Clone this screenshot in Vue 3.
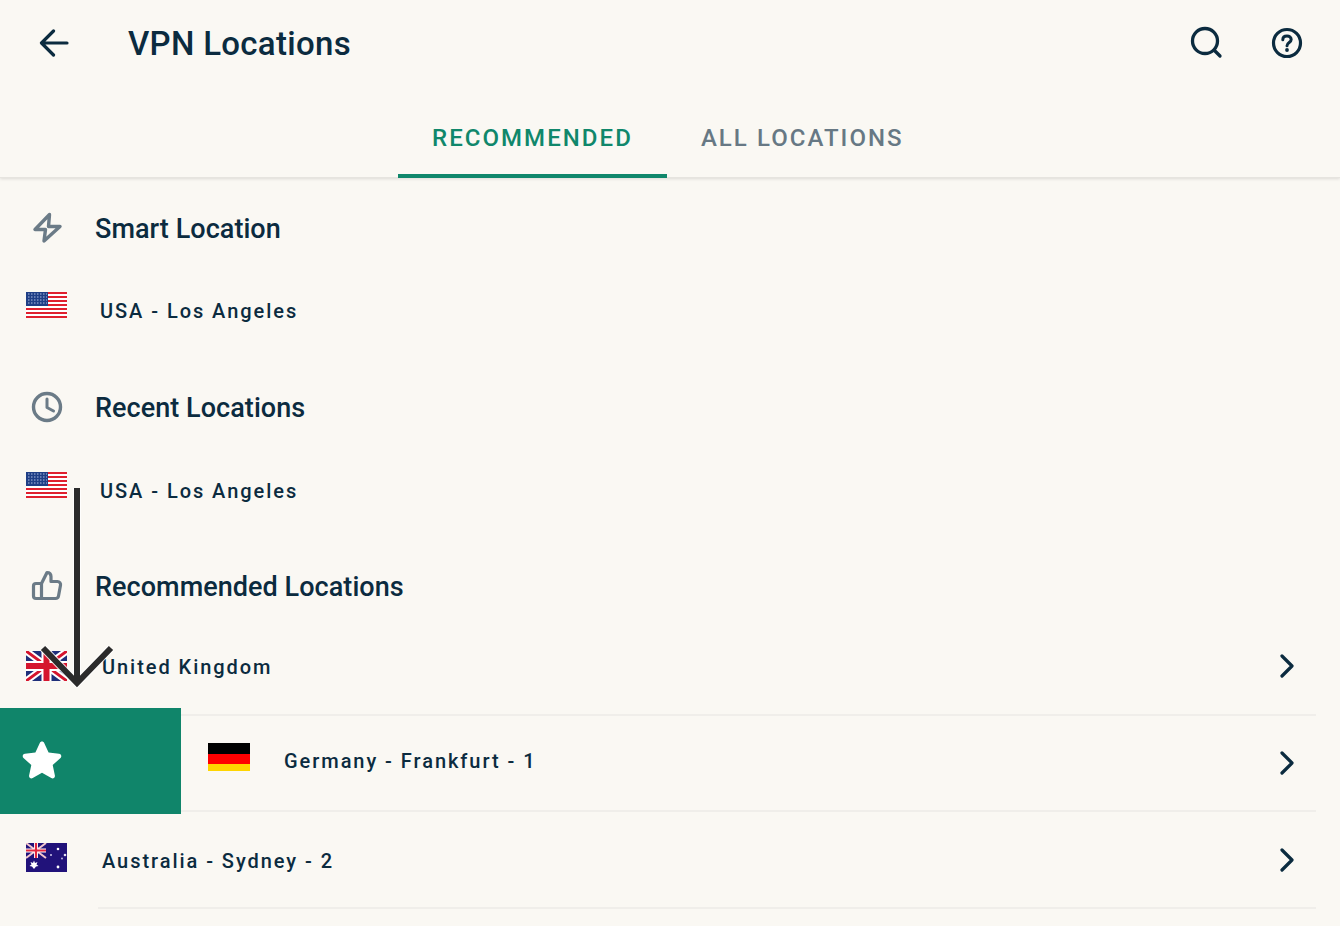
<script setup>
const chevron = "M2 2 L12 12 L2 22"
</script>

<template>
  <div class="screen">
    <header class="top">
      <div class="toolbar">
        <svg class="back" width="30" height="28" viewBox="0 0 30 28" fill="none">
          <path d="M28 14H3M14.500 2 L2.500 14 L14.500 26" stroke="#0b2b3f" stroke-width="3.200" stroke-linecap="round" stroke-linejoin="round" />
        </svg>
        <h1>VPN Locations</h1>
        <div class="tools">
          <svg width="34" height="34" viewBox="0 0 34 34" fill="none">
            <circle cx="15" cy="15" r="12.500" stroke="#0b2b3f" stroke-width="3.300" />
            <path d="M24.500 24.500 L30 30" stroke="#0b2b3f" stroke-width="3.300" stroke-linecap="round" />
          </svg>
          <svg width="32" height="32" viewBox="0 0 32 32" fill="none">
            <circle cx="16" cy="16" r="13.500" stroke="#0b2b3f" stroke-width="3.200" />
            <path d="M11.800 12.800 C11.800 10.300 13.700 9 16 9 C18.400 9 20.200 10.400 20.200 12.500 C20.200 15.500 16 15.500 16 18.800" stroke="#0b2b3f" stroke-width="3" stroke-linecap="round" />
            <circle cx="16" cy="23" r="1.900" fill="#0b2b3f" />
          </svg>
        </div>
      </div>
      <nav class="tabs">
        <div class="tab active">RECOMMENDED</div>
        <div class="tab">ALL LOCATIONS</div>
      </nav>
    </header>

    <main class="list">
      <section class="group">
        <div class="head">
          <svg width="32" height="32" viewBox="0 0 32 32" fill="none">
            <path d="M18.500 2.500 L4 17.500 H14.500 L13 29 L29 14.500 H17.500 Z" stroke="#6b7b87" stroke-width="3.400" stroke-linejoin="round" />
          </svg>
          <span>Smart Location</span>
        </div>
        <div class="plain-row">
          <svg class="flag" width="41" height="26" viewBox="0 0 41 26">
            <rect width="41" height="26" fill="#fff" />
            <path d="M0 1h41M0 5h41M0 9h41M0 13h41M0 17h41M0 21h41M0 25h41" stroke="#e0202e" stroke-width="2" />
            <rect width="22" height="14" fill="#1f3f86" />
            <path d="M2 2h19M2 5h19M2 8h19M2 11h19" stroke="#aebde0" stroke-width="1" stroke-dasharray="1.500 1.500" />
          </svg>
          <span class="name">USA - Los Angeles</span>
        </div>
      </section>

      <section class="group">
        <div class="head">
          <svg width="32" height="32" viewBox="0 0 32 32" fill="none">
            <circle cx="16" cy="16" r="13.500" stroke="#6b7b87" stroke-width="3.400" />
            <path d="M16 8 V16.500 L22.500 20" stroke="#6b7b87" stroke-width="3" stroke-linecap="round" stroke-linejoin="round" />
          </svg>
          <span>Recent Locations</span>
        </div>
        <div class="plain-row late">
          <svg class="flag" width="41" height="26" viewBox="0 0 41 26">
            <rect width="41" height="26" fill="#fff" />
            <path d="M0 1h41M0 5h41M0 9h41M0 13h41M0 17h41M0 21h41M0 25h41" stroke="#e0202e" stroke-width="2" />
            <rect width="22" height="14" fill="#1f3f86" />
            <path d="M2 2h19M2 5h19M2 8h19M2 11h19" stroke="#aebde0" stroke-width="1" stroke-dasharray="1.500 1.500" />
          </svg>
          <span class="name">USA - Los Angeles</span>
        </div>
      </section>

      <section class="group short">
        <div class="head">
          <svg width="32" height="32" viewBox="0 0 32 32" fill="none">
            <path d="M10.500 13.500 V28.500 H5 C3.500 28.500 2.500 27.500 2.500 26 V16 C2.500 14.500 3.500 13.500 5 13.500 Z M10.500 13.500 L16 2.500 C18.500 2.500 20 4.200 20 6.500 V11.500 H26.500 C28.500 11.500 30 13.300 29.500 15.300 L27.500 26 C27.200 27.500 26 28.500 24.500 28.500 H10.500" stroke="#6b7b87" stroke-width="3.200" stroke-linejoin="round" />
          </svg>
          <span>Recommended Locations</span>
        </div>
      </section>

      <div class="loc-row uk">
        <svg class="flag" width="41" height="30" viewBox="0 0 41 30">
          <rect width="41" height="30" fill="#1f2f7a" />
          <path d="M0 0L41 30M41 0L0 30" stroke="#fff" stroke-width="7" />
          <path d="M0 0L41 30M41 0L0 30" stroke="#d5152e" stroke-width="3" />
          <path d="M20.500 0V30M0 15H41" stroke="#fff" stroke-width="10" />
          <path d="M20.500 0V30M0 15H41" stroke="#d5152e" stroke-width="6" />
        </svg>
        <div class="loc-body">
          <span class="name">United Kingdom</span>
          <svg class="chev" width="15" height="24" viewBox="0 0 15 24" fill="none">
            <path :d="chevron" stroke="#0b2b3f" stroke-width="3.200" stroke-linecap="round" stroke-linejoin="round" />
          </svg>
        </div>
      </div>

      <div class="loc-row de">
        <div class="swipe-action">
          <svg width="42" height="40" viewBox="0 0 42 40">
            <path d="M21 1.500 C22 1.500 22.800 2 23.200 3 L27.600 12.600 L38 13.800 C40.300 14.100 41 16.500 39.500 18 L31.700 25 L33.900 35.400 C34.300 37.600 32.200 39.200 30.300 38.100 L21 32.800 L11.700 38.100 C9.800 39.200 7.700 37.600 8.100 35.400 L10.300 25 L2.500 18 C1 16.500 1.700 14.100 4 13.800 L14.400 12.600 L18.800 3 C19.200 2 20 1.500 21 1.500 Z" fill="#fff" />
          </svg>
        </div>
        <div class="loc-body">
          <svg class="flag" width="42" height="28" viewBox="0 0 42 28">
            <rect width="42" height="11" fill="#000" />
            <rect y="11" width="42" height="10" fill="#f00" />
            <rect y="21" width="42" height="7" fill="#ffd500" />
          </svg>
          <span class="name">Germany - Frankfurt - 1</span>
          <svg class="chev" width="15" height="24" viewBox="0 0 15 24" fill="none">
            <path :d="chevron" stroke="#0b2b3f" stroke-width="3.200" stroke-linecap="round" stroke-linejoin="round" />
          </svg>
        </div>
      </div>

      <div class="loc-row au">
        <svg class="flag" width="41" height="29" viewBox="0 0 41 29">
          <rect width="41" height="29" fill="#21127a" />
          <path d="M0 0L20 15M20 0L0 15" stroke="#f3c6cc" stroke-width="2" />
          <path d="M10 0V15M0 7.500H20" stroke="#fff" stroke-width="4" />
          <path d="M10 0V15M0 7.500H20" stroke="#e2263f" stroke-width="2.200" />
          <path d="M8 17.500 L9 20 L11.500 19 L10.500 21.500 L12.500 23 L10 23.500 L8 26 L6 23.500 L3.500 23 L5.500 21.500 L4.500 19 L7 20 Z" fill="#fff" />
          <circle cx="32" cy="6" r="1.300" fill="#fff" />
          <circle cx="25" cy="12" r="1" fill="#cfc8ea" />
          <circle cx="39" cy="12" r="1.300" fill="#e6e2f4" />
          <circle cx="36" cy="15.500" r="0.900" fill="#cfc8ea" />
          <circle cx="32" cy="24" r="1.400" fill="#fff" />
        </svg>
        <div class="loc-body">
          <span class="name">Australia - Sydney - 2</span>
          <svg class="chev" width="15" height="24" viewBox="0 0 15 24" fill="none">
            <path :d="chevron" stroke="#0b2b3f" stroke-width="3.200" stroke-linecap="round" stroke-linejoin="round" />
          </svg>
        </div>
      </div>
    </main>

    <svg class="arrow" width="84" height="206" viewBox="0 0 84 206" fill="none">
      <path d="M39 2 V197 M5 162 L39 197 L73 162" stroke="#fff" stroke-opacity="0.800" stroke-width="8" />
      <path d="M39 2 V197 M5 162 L39 197 L73 162" stroke="#2b2b2b" stroke-width="6" />
    </svg>
  </div>
</template>

<style scoped>
.screen {
  position: relative;
  width: 1340px;
  height: 926px;
  overflow: hidden;
  background: #faf8f3;
  color: #0b2b3f;
  font-family: Roboto, "Liberation Sans", sans-serif;
}
.top {
  height: 178px;
  box-sizing: border-box;
  border-bottom: 1px solid #e6e4df;
  box-shadow: 0 1px 3px rgba(0, 0, 0, 0.12);
  display: flex;
  flex-direction: column;
}
.toolbar {
  display: flex;
  align-items: center;
  height: 86px;
  padding: 0 37px 0 39px;
}
.toolbar h1 {
  margin: 2px 0 0 59px;
  font-size: 33px;
  font-weight: 500;
  letter-spacing: 0.300px;
  line-height: 40px;
}
.tools {
  margin-left: auto;
  display: flex;
  align-items: center;
  gap: 47px;
}
.tabs {
  flex: 1;
  display: flex;
  padding-left: 398px;
}
.tab {
  padding: 37px 34px 0;
  font-size: 24px;
  font-weight: 500;
  letter-spacing: 2.050px;
  line-height: 30px;
  color: #677884;
}
.tab.active {
  color: #10876b;
  border-bottom: 4px solid #10876b;
  margin-bottom: -1px;
}
.list {
  padding-top: 20px;
}
.group {
  height: 179px;
}
.group.short {
  height: 60px;
}
.head {
  display: flex;
  align-items: center;
  height: 60px;
  padding-left: 31px;
  gap: 32px;
  font-size: 27px;
  font-weight: 500;
  letter-spacing: 0.050px;
}
.head span {
  margin-top: 2px;
}
.plain-row {
  display: flex;
  align-items: flex-start;
  padding-left: 26px;
}
.flag {
  flex: none;
}
.plain-row .flag {
  margin-top: 34px;
}
.plain-row .name {
  margin: 39px 0 0 33px;
}
.plain-row.late {
  padding-top: 1px;
}
.name {
  font-size: 20px;
  font-weight: 500;
  letter-spacing: 1.950px;
  line-height: 28px;
}
.loc-row {
  display: flex;
  box-sizing: border-box;
  padding-left: 26px;
}
.loc-body {
  flex: 1;
  display: flex;
  align-items: center;
  margin: 0 24px 0 30px;
  border-bottom: 2px solid #f0eeea;
}
.loc-body .name {
  margin-left: 5px;
}
.chev {
  margin-left: auto;
  margin-right: 21px;
}
.uk {
  height: 100px;
}
.uk .flag {
  margin-top: 35px;
}
.uk .name {
  margin-top: 4px;
}
.uk .chev {
  margin-top: 2px;
}
.de {
  height: 96px;
  padding-left: 0;
}
.de .loc-body {
  margin-left: 0;
  padding-left: 27px;
}
.de .flag {
  margin-bottom: 12px;
}
.de .loc-body .name {
  margin-left: 34px;
  margin-bottom: 4px;
}
.au {
  height: 97px;
}
.au .flag {
  margin-top: 31px;
}
.au .loc-body {
  margin-left: 31px;
}
.au .name {
  margin-left: 4px;
  margin-top: 3px;
}
.swipe-action {
  flex: none;
  width: 181px;
  height: 106px;
  margin-top: -8px;
  position: relative;
  background: #10856a;
  display: flex;
  align-items: center;
  padding: 0 0 2px 21px;
  box-sizing: border-box;
}
.arrow {
  position: absolute;
  left: 38px;
  top: 486px;
}
</style>
